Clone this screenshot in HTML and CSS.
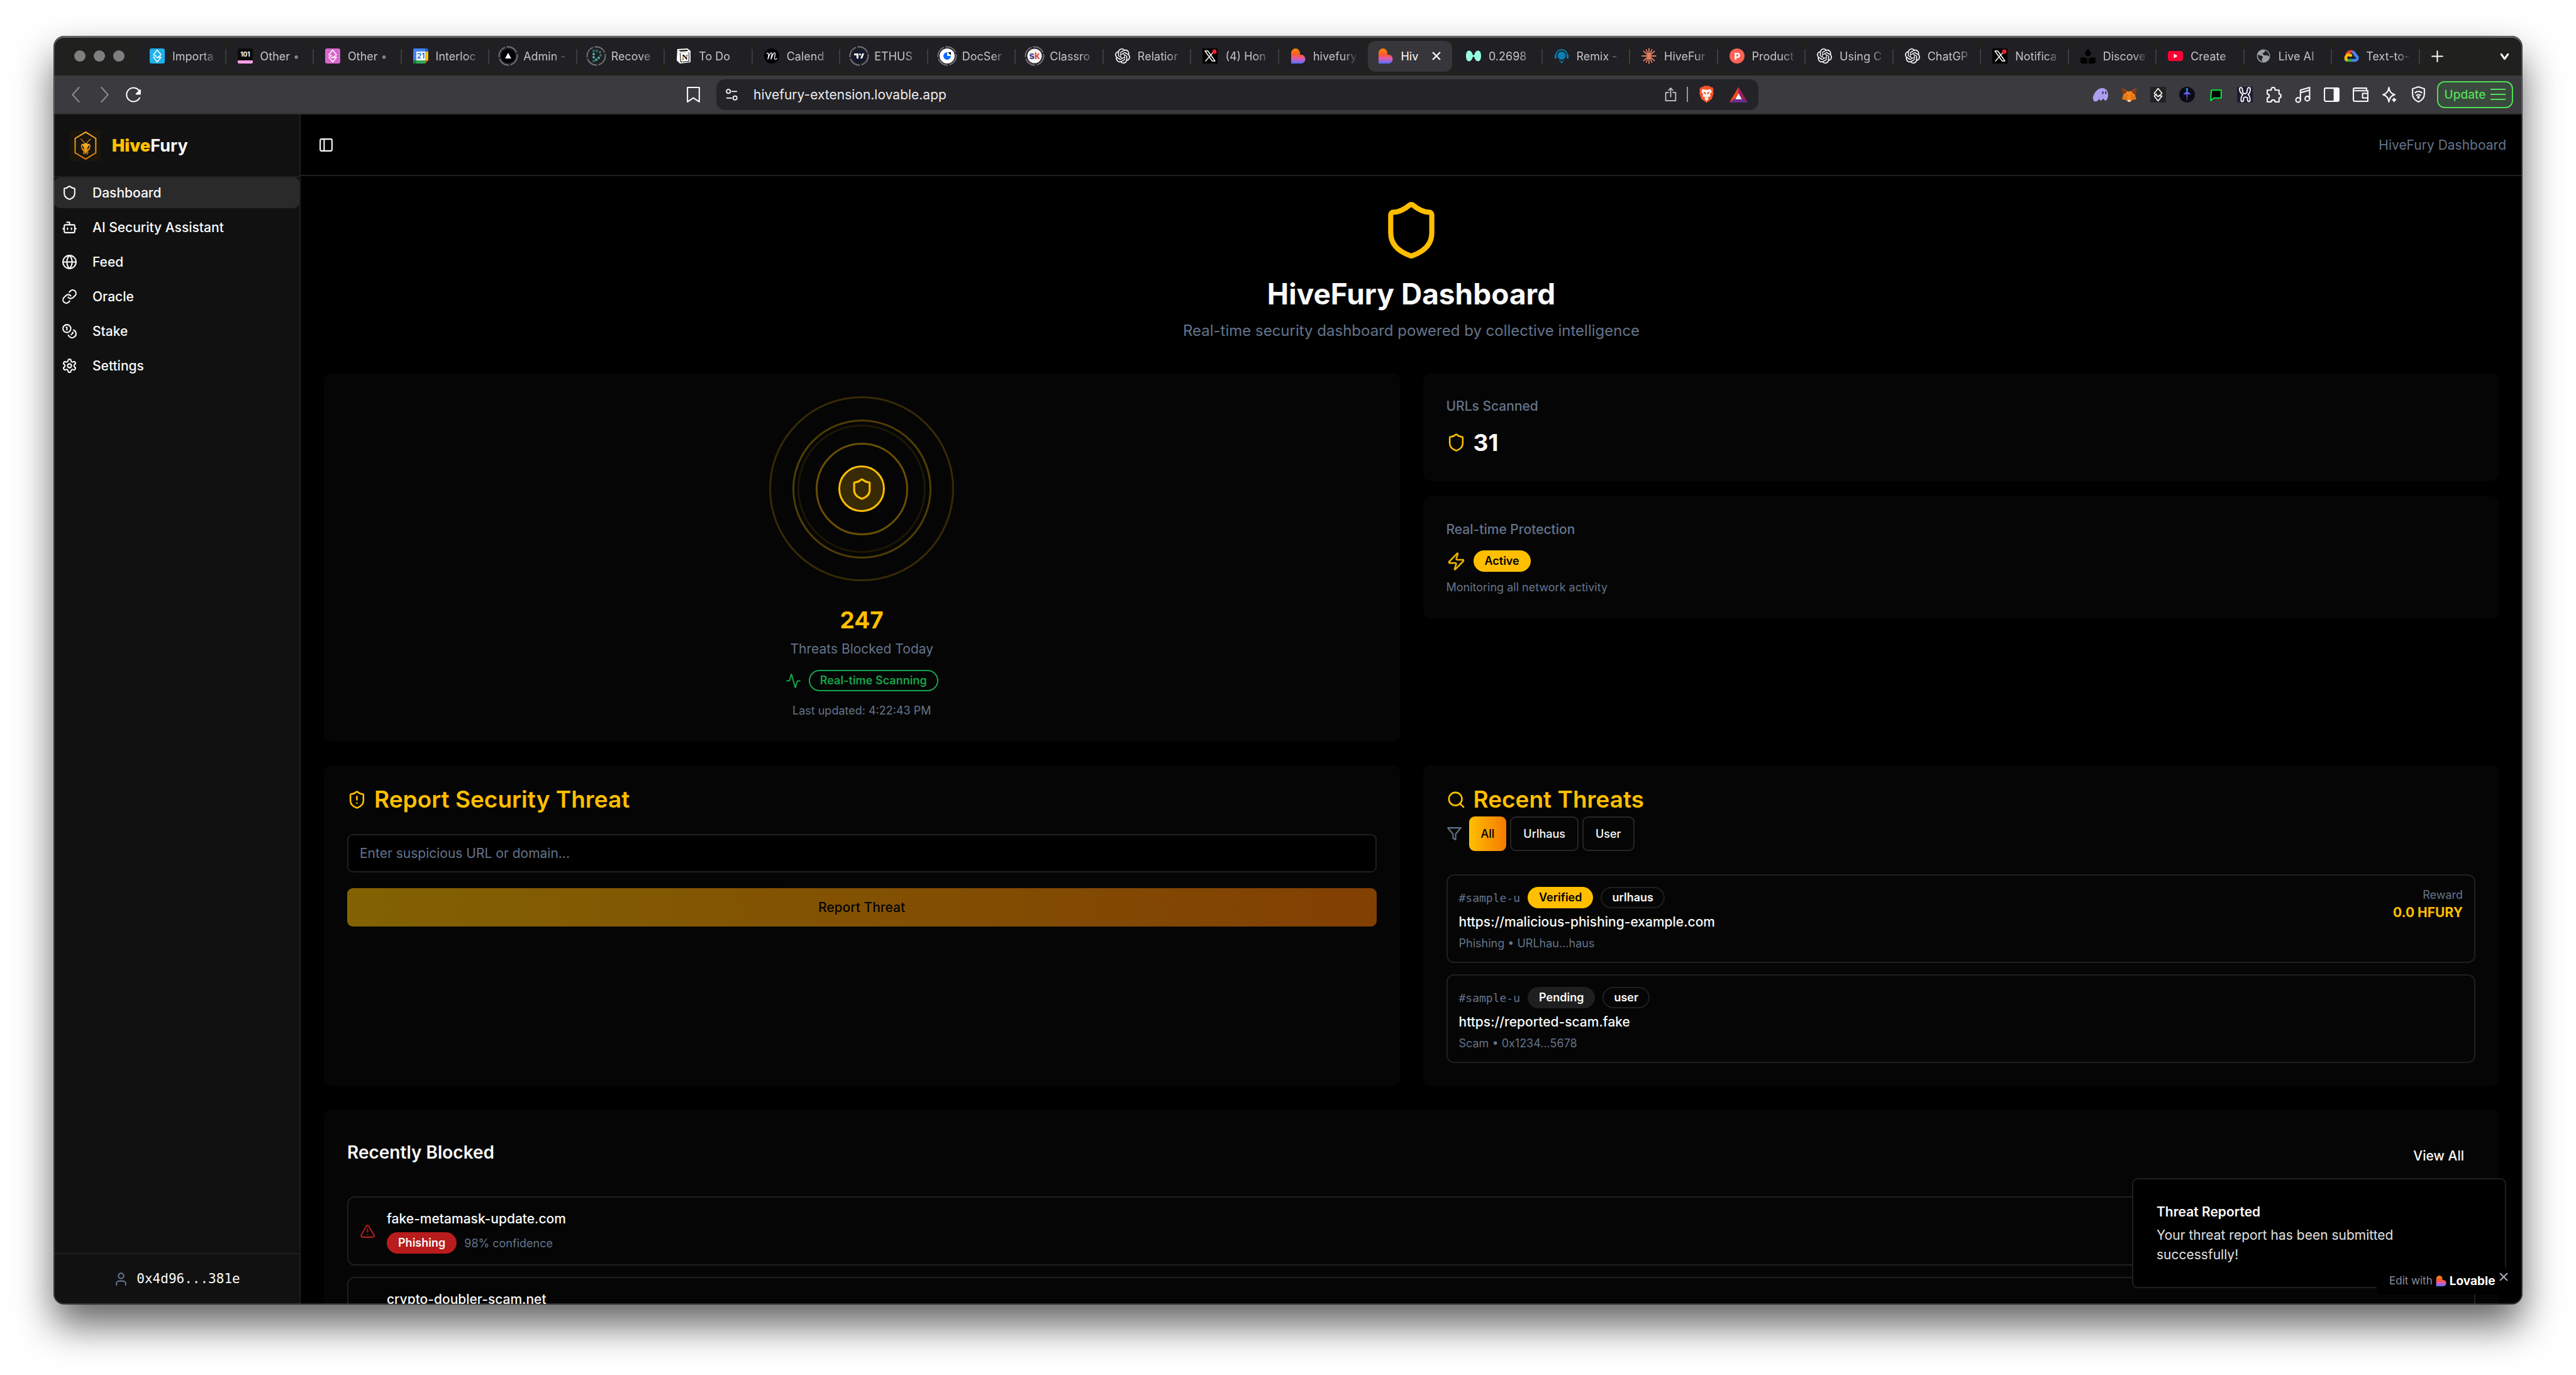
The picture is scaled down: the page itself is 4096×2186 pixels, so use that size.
FILE: index.html
```html
<!DOCTYPE html>
<html lang="en">
<head>
<meta charset="utf-8">
<title>HiveFury Dashboard</title>
<link rel="stylesheet" href="styles.css">
</head>
<body>
<svg class="defs" aria-hidden="true">
  <defs>
    <linearGradient id="g-lovable" x1="0" y1="0" x2="0" y2="1"><stop offset="0" stop-color="#ff8a00"/><stop offset=".4" stop-color="#ff5a2c"/><stop offset=".7" stop-color="#d85bb8"/><stop offset="1" stop-color="#4b73ff"/></linearGradient>
    <linearGradient id="g-sword" x1="0" y1="0" x2="0" y2="1"><stop offset="0" stop-color="#22d3ee"/><stop offset=".5" stop-color="#6d4bff"/><stop offset="1" stop-color="#ff8a3c"/></linearGradient>
    <linearGradient id="g-bee" x1="0" y1="0" x2="0" y2="1"><stop offset="0" stop-color="#ffb52e"/><stop offset="1" stop-color="#d98207"/></linearGradient>
  </defs>
  <symbol id="shield" viewBox="0 0 24 24"><path d="M20 13c0 5-3.500 7.500-7.660 8.950a1 1 0 0 1-.67-.01C7.500 20.500 4 18 4 13V6a1 1 0 0 1 1-1c2 0 4.500-1.200 6.240-2.720a1.170 1.170 0 0 1 1.520 0C14.510 3.810 17 5 19 5a1 1 0 0 1 1 1z"/></symbol>
  <symbol id="bot" viewBox="0 0 24 24"><path d="M12 8V4H8"/><rect width="16" height="12" x="4" y="8" rx="2"/><path d="M2 14h2M20 14h2M15 13v2M9 13v2"/></symbol>
  <symbol id="globe" viewBox="0 0 24 24"><circle cx="12" cy="12" r="10"/><path d="M12 2a14.500 14.500 0 0 0 0 20 14.500 14.500 0 0 0 0-20M2 12h20"/></symbol>
  <symbol id="link" viewBox="0 0 24 24"><path d="M10 13a5 5 0 0 0 7.540.54l3-3a5 5 0 0 0-7.070-7.070l-1.720 1.710"/><path d="M14 11a5 5 0 0 0-7.540-.54l-3 3a5 5 0 0 0 7.070 7.070l1.710-1.710"/></symbol>
  <symbol id="coins" viewBox="0 0 24 24"><circle cx="8" cy="8" r="6"/><path d="M18.090 10.370A6 6 0 1 1 10.340 18M7 6h1v4M16.710 13.880l.7.71-2.820 2.820"/></symbol>
  <symbol id="settings" viewBox="0 0 24 24"><path d="M12.220 2h-.44a2 2 0 0 0-2 2v.18a2 2 0 0 1-1 1.730l-.43.25a2 2 0 0 1-2 0l-.15-.08a2 2 0 0 0-2.730.73l-.22.38a2 2 0 0 0 .73 2.730l.15.1a2 2 0 0 1 1 1.720v.51a2 2 0 0 1-1 1.740l-.15.09a2 2 0 0 0-.73 2.730l.22.38a2 2 0 0 0 2.730.73l.15-.08a2 2 0 0 1 2 0l.43.25a2 2 0 0 1 1 1.730V20a2 2 0 0 0 2 2h.44a2 2 0 0 0 2-2v-.18a2 2 0 0 1 1-1.730l.43-.25a2 2 0 0 1 2 0l.15.08a2 2 0 0 0 2.730-.73l.22-.39a2 2 0 0 0-.73-2.730l-.15-.08a2 2 0 0 1-1-1.740v-.5a2 2 0 0 1 1-1.740l.15-.09a2 2 0 0 0 .73-2.730l-.22-.38a2 2 0 0 0-2.730-.73l-.15.08a2 2 0 0 1-2 0l-.43-.25a2 2 0 0 1-1-1.730V4a2 2 0 0 0-2-2z"/><circle cx="12" cy="12" r="3"/></symbol>
  <symbol id="panel" viewBox="0 0 24 24"><rect width="18" height="18" x="3" y="3" rx="2"/><path d="M9 3v18"/></symbol>
  <symbol id="activity" viewBox="0 0 24 24"><path d="M22 12h-2.480a2 2 0 0 0-1.930 1.460l-2.350 8.360a.25.25 0 0 1-.48 0L9.240 2.180a.25.25 0 0 0-.48 0l-2.350 8.360A2 2 0 0 1 4.490 12H2"/></symbol>
  <symbol id="zap" viewBox="0 0 24 24"><path d="M4 14a1 1 0 0 1-.78-1.630l9.900-10.200a.5.5 0 0 1 .86.46l-1.920 6.020A1 1 0 0 0 13 10h7a1 1 0 0 1 .78 1.630l-9.900 10.200a.5.5 0 0 1-.86-.46l1.920-6.020A1 1 0 0 0 11 14z"/></symbol>
  <symbol id="search" viewBox="0 0 24 24"><circle cx="11" cy="11" r="8"/><path d="m21 21-4.300-4.300"/></symbol>
  <symbol id="filter" viewBox="0 0 24 24"><path d="M22 3H2l8 9.460V19l4 2v-8.540z"/></symbol>
  <symbol id="alert" viewBox="0 0 24 24"><path d="m21.730 18-8-14a2 2 0 0 0-3.480 0l-8 14A2 2 0 0 0 4 21h16a2 2 0 0 0 1.730-3M12 9v4M12 17h.01"/></symbol>
  <symbol id="user" viewBox="0 0 24 24"><path d="M19 21v-2a4 4 0 0 0-4-4H9a4 4 0 0 0-4 4v2"/><circle cx="12" cy="7" r="4"/></symbol>
  <symbol id="x" viewBox="0 0 24 24"><path d="M5 5l14 14M19 5L5 19"/></symbol>
  <symbol id="lovable" viewBox="0 0 24 24"><path fill="url(#g-lovable)" stroke="none" d="M1 7.500a7 7.500 0 0 1 14 0V10h2a6.500 7 0 0 1 0 14H1z"/></symbol>
  <symbol id="openai" viewBox="0 0 24 24"><path fill="#fff" stroke="none" d="M22.2819 9.8211a5.9847 5.9847 0 0 0-.5157-4.9108 6.0462 6.0462 0 0 0-6.5098-2.9A6.0651 6.0651 0 0 0 4.9807 4.1818a5.9847 5.9847 0 0 0-3.9977 2.9 6.0462 6.0462 0 0 0 .7427 7.0966 5.98 5.98 0 0 0 .511 4.9107 6.051 6.051 0 0 0 6.5146 2.9001A5.9847 5.9847 0 0 0 13.2599 24a6.0557 6.0557 0 0 0 5.7718-4.2058 5.9894 5.9894 0 0 0 3.9977-2.9001 6.0557 6.0557 0 0 0-.7475-7.0729zm-9.022 12.6081a4.4755 4.4755 0 0 1-2.8764-1.0408l.1419-.0804 4.7783-2.7582a.7948.7948 0 0 0 .3927-.6813v-6.7369l2.02 1.1686a.071.071 0 0 1 .038.052v5.5826a4.504 4.504 0 0 1-4.4945 4.4944zm-9.6607-4.1254a4.4708 4.4708 0 0 1-.5346-3.0137l.142.0852 4.783 2.7582a.7712.7712 0 0 0 .7806 0l5.8428-3.3685v2.3324a.0804.0804 0 0 1-.0332.0615L9.74 19.9502a4.4992 4.4992 0 0 1-6.1408-1.6464zM2.3408 7.8956a4.485 4.485 0 0 1 2.3655-1.9728V11.6a.7664.7664 0 0 0 .3879.6765l5.8144 3.3543-2.0201 1.1685a.0757.0757 0 0 1-.071 0l-4.8303-2.7865A4.504 4.504 0 0 1 2.3408 7.872zm16.5963 3.8558L13.1038 8.364 15.1192 7.2a.0757.0757 0 0 1 .071 0l4.8303 2.7913a4.4944 4.4944 0 0 1-.6765 8.1042v-5.6772a.79.79 0 0 0-.407-.667zm2.0107-3.0231l-.142-.0852-4.7735-2.7818a.7759.7759 0 0 0-.7854 0L9.409 9.2297V6.8974a.0662.0662 0 0 1 .0284-.0615l4.8303-2.7866a4.4992 4.4992 0 0 1 6.6802 4.66zM8.3065 12.863l-2.02-1.1638a.0804.0804 0 0 1-.038-.0567V6.0742a4.4992 4.4992 0 0 1 7.3757-3.4537l-.142.0805L8.704 5.459a.7948.7948 0 0 0-.3927.6813zm1.0976-2.3654l2.602-1.4998 2.6069 1.4998v2.9994l-2.5974 1.4997-2.6067-1.4997Z"/></symbol>
  <symbol id="skiff" viewBox="0 0 24 24"><path fill="none" stroke="#fff" stroke-width="1.500" stroke-linejoin="round" d="M12 2.500L6 10l6 5 6-5zM6 14l6 7.500L18 14h-6M6 14l4-3"/></symbol>
  <symbol id="xlogo" viewBox="0 0 24 24"><rect width="24" height="24" fill="#000"/><path fill="none" stroke="#fff" stroke-width="1.500" d="M4 4h4.500L20 20h-4.500zM19 4L5 20"/><circle cx="19" cy="5" r="3.500" fill="#f4212e"/></symbol>
</svg>

<div class="window">
  <div class="tabstrip">
    <div class="lights"><i></i><i></i><i></i></div>
    <div class="tabs" role="tablist">
      <button class="tab" role="tab"><svg class="fav" viewBox="0 0 24 24"><rect width="24" height="24" rx="3" fill="#1fb0ec"/><use href="#skiff"/></svg><span>Importa</span></button>
      <button class="tab" role="tab"><svg class="fav" viewBox="0 0 24 24"><rect width="24" height="24" rx="2" fill="#0b0b0b"/><path d="M0 19h24v3a2 2 0 0 1-2 2H2a2 2 0 0 1-2-2z" fill="#ffa0ea"/><text x="12" y="13" text-anchor="middle" font-size="10" font-weight="700" fill="#fff">101</text></svg><span>Other •</span></button>
      <button class="tab" role="tab"><svg class="fav" viewBox="0 0 24 24"><rect width="24" height="24" rx="3" fill="#d966cc"/><use href="#skiff"/></svg><span>Other •</span></button>
      <button class="tab" role="tab"><svg class="fav" viewBox="0 0 24 24"><path fill="#4285f4" d="M2 0h17v24H0V2a2 2 0 0 1 2-2z"/><path fill="#1967d2" d="M19 0h3a2 2 0 0 1 2 2v3h-5z"/><path fill="#fbbc04" d="M19 5h5v14h-5z"/><path fill="#34a853" d="M0 19h19v5H2a2 2 0 0 1-2-2z"/><path fill="#188038" d="M0 19h5v5H2a2 2 0 0 1-2-2z"/><path fill="#ea4335" d="M19 19h5l-5 5z"/><path fill="#fff" d="M5 5h14v14H5z"/><text x="12" y="16" text-anchor="middle" font-size="12" font-weight="600" fill="#1967d2">21</text></svg><span>Interloc</span></button>
      <button class="tab" role="tab"><svg class="fav ring" viewBox="0 0 32 32"><circle class="dash" cx="16" cy="16" r="14.500"/><circle cx="16" cy="16" r="11" fill="#000"/><path fill="#fff" d="M16 11l5 9H11z"/></svg><span>Admin -</span></button>
      <button class="tab" role="tab"><svg class="fav ring" viewBox="0 0 32 32"><circle class="dash" cx="16" cy="16" r="14.500"/><g fill="#2f6f70"><circle cx="12" cy="8" r="2"/><circle cx="17" cy="8" r="2"/><circle cx="22" cy="10" r="2"/><circle cx="23" cy="15" r="2"/><circle cx="12" cy="24" r="2"/></g><g fill="#4fb0a8"><circle cx="12" cy="13" r="2"/><circle cx="20" cy="19" r="2"/><circle cx="16" cy="22" r="2"/><circle cx="12" cy="18" r="2"/></g></svg><span>Recove</span></button>
      <button class="tab" role="tab"><svg class="fav" viewBox="0 0 24 24"><path fill="#fff" d="M2 1l16-1 5 4v18l-17 2-5-5z"/><path fill="#0b0b0b" d="M4 3l13-1 3 2-13 1zM6 7l15-1v15L7 22z"/><path fill="#fff" d="M7 7l13-1v14L8 21z"/><text x="14" y="18" text-anchor="middle" font-size="13" font-weight="700" font-family="Liberation Serif, serif" fill="#000">N</text></svg><span>To Do</span></button>
      <button class="tab" role="tab"><svg class="fav" viewBox="0 0 24 24"><circle cx="12" cy="12" r="12" fill="#000"/><path fill="none" stroke="#fff" stroke-width="1.300" d="M4 8c3-2 4 1 2 9 2-6 4-11 6-10 2 1-2 8-1 10 2-5 4-11 6-10s-2 9 0 10q2 1 3-1"/></svg><span>Calend</span></button>
      <button class="tab" role="tab"><svg class="fav ring" viewBox="0 0 32 32"><circle class="dash" cx="16" cy="16" r="14.500"/><circle cx="16" cy="16" r="11" fill="#131a2c"/><path fill="#fff" d="M8 12h7v8h-3v-5H8zM21 20h-3l3-8h3z"/><circle cx="17.500" cy="13.500" r="1.600" fill="#fff"/></svg><span>ETHUS</span></button>
      <button class="tab" role="tab"><svg class="fav ring" viewBox="0 0 32 32"><circle class="dash" cx="16" cy="16" r="14.500"/><circle cx="16" cy="16" r="12" fill="#fff"/><path fill="#0a6cff" d="M16 10v6h6a6 6 0 1 1-6-6z"/><path fill="#111" d="M17 10h5v5z"/></svg><span>DocSer</span></button>
      <button class="tab" role="tab"><svg class="fav ring" viewBox="0 0 32 32"><circle class="dash" cx="16" cy="16" r="14.500"/><circle cx="16" cy="16" r="11.500" fill="#f6f3f2"/><text x="16" y="21" text-anchor="middle" font-size="15" font-weight="700" fill="#2d3091">s<tspan fill="#ea4c36">k</tspan></text></svg><span>Classro</span></button>
      <button class="tab" role="tab"><svg class="fav"><use href="#openai"/></svg><span>Relatior</span></button>
      <button class="tab" role="tab"><svg class="fav"><use href="#xlogo"/></svg><span>(4) Hon</span></button>
      <button class="tab" role="tab"><svg class="fav"><use href="#lovable"/></svg><span>hivefury</span></button>
      <button class="tab active" role="tab" aria-selected="true"><svg class="fav"><use href="#lovable"/></svg><span>Hiv</span><svg class="close heavy"><use href="#x"/></svg></button>
      <button class="tab" role="tab"><svg class="fav" viewBox="0 0 24 24"><path fill="#97fce4" d="M0 12c0-11 8-10 10-4 1 4 3 4 4 0 2-6 10-7 10 4s-8 10-10 4c-1-4-3-4-4 0-2 6-10 7-10-4z"/></svg><span>0.2698</span></button>
      <button class="tab" role="tab"><svg class="fav" viewBox="0 0 24 24"><path fill="none" stroke="#0b7fb0" stroke-width="2" d="M3 11a9 9 0 0 1 18 0"/><path fill="#0b7fb0" d="M12 5a6 6 0 1 1 0 13 6 6 0 0 1 0-13zM1 10h3v6H1zM20 10h3v6h-3zM7 18l5 3 5-3-5 6z"/></svg><span>Remix -</span></button>
      <button class="tab" role="tab"><svg class="fav" viewBox="0 0 24 24"><path fill="none" stroke="#e08060" stroke-width="1.800" d="M12 0v24M1 12h22M3.500 4.500l17 15M20.500 4.500l-17 15M7.500 2l9 20M16.500 2l-9 20"/></svg><span>HiveFur</span></button>
      <button class="tab" role="tab"><svg class="fav" viewBox="0 0 24 24"><circle cx="12" cy="12" r="12" fill="#ff6154"/><text x="12.500" y="17.500" text-anchor="middle" font-size="15" font-weight="800" fill="#fff">P</text></svg><span>Product</span></button>
      <button class="tab" role="tab"><svg class="fav"><use href="#openai"/></svg><span>Using C</span></button>
      <button class="tab" role="tab"><svg class="fav"><use href="#openai"/></svg><span>ChatGP</span></button>
      <button class="tab" role="tab"><svg class="fav"><use href="#xlogo"/></svg><span>Notifica</span></button>
      <button class="tab" role="tab"><svg class="fav" viewBox="0 0 24 24"><path fill="#000" d="M12 0q5 6 5 8t-5 5q-5-3-5-5t5-8zM0 15q8-2 11 2v7H3q-3 0-3-3zM24 15q-8-2-11 2v7h8q3 0 3-3z"/></svg><span>Discove</span></button>
      <button class="tab" role="tab"><svg class="fav" viewBox="0 0 24 24"><rect y="4" width="24" height="16" rx="4" fill="#ff0033"/><path fill="#fff" d="M9.500 8.500v7l6-3.500z"/></svg><span>Create</span></button>
      <button class="tab" role="tab"><svg class="fav" viewBox="0 0 24 24"><circle cx="12" cy="12" r="10.500" fill="#9aa0a6"/><path fill="#201f23" d="M3 10l7 2q2 2 0 4t1 5q-8-2-8-11zM14 3q1 3-2 4t0 3 4 1 5 2q1-7-7-10z"/></svg><span>Live AI</span></button>
      <button class="tab" role="tab"><svg class="fav" viewBox="0 0 24 24"><g fill="none" stroke-width="4.500"><path stroke="#ea4335" d="M6 9a6.500 6.500 0 0 1 11-2"/><path stroke="#4285f4" d="M16 6q3 2 3 5a4 4 0 0 1-1 8h-6"/><path stroke="#34a853" d="M12 19H7q-2 0-3-1"/><path stroke="#fbbc04" d="M5 18a5 5 0 0 1 4-8l3 1"/></g></svg><span>Text-to-</span></button>
    </div>
    <div class="strip-end">
      <button class="bare" aria-label="New tab"><svg class="ic" viewBox="0 0 24 24"><path d="M12 4v16M4 12h16"/></svg></button>
      <button class="bare" aria-label="Search tabs"><svg class="ic heavy" viewBox="0 0 24 24"><path d="M7 9l5 7 5-7"/></svg></button>
    </div>
  </div>

  <div class="toolbar">
    <div class="nav-left">
      <button class="bare dim" aria-label="Back"><svg class="ic" viewBox="0 0 24 24"><path d="M17 1L7 12l10 11"/></svg></button>
      <button class="bare dim" aria-label="Forward"><svg class="ic" viewBox="0 0 24 24"><path d="M7 1l10 11L7 23"/></svg></button>
      <button class="bare" aria-label="Reload"><svg class="ic" viewBox="0 0 24 24"><path d="M21 17a10.500 10.500 0 1 1 0-10"/><path fill="currentColor" d="M22 5v6h-6z"/></svg></button>
    </div>
    <button class="bare bookmark" aria-label="Bookmark"><svg class="ic" viewBox="0 0 24 24"><path d="M3 1h18v22l-9-6-9 6z"/></svg></button>
    <div class="address">
      <svg class="ic small-ic" viewBox="0 0 24 24"><circle cx="6" cy="6" r="3.500"/><path d="M12 6h9M3 18h9"/><circle cx="18" cy="18" r="3.500"/></svg>
      <input type="text" aria-label="Address" value="hivefury-extension.lovable.app">
      <div class="address-end">
        <svg class="ic small-ic" viewBox="0 0 24 24"><path d="M8 8H3v15h18V8h-5M12 16V0M8 4l4-4 4 4"/></svg>
        <i class="bar"></i>
        <svg class="ic solid brave" viewBox="0 0 24 26"><path fill="#fb542b" d="M8 0h8l2 2 3 0 2 4-1 2 1 3-3 9-8 6-8-6-3-9 1-3-1-2 2-4h3z"/><path fill="#fff" d="M6 5l4 1h4l4-1 2 4-3 4 1 3-4 1 1 3-3 3-3-3 1-3-4-1 1-3-3-4z"/><path fill="#fb542b" d="M7 9l4 1v4l-3-3zM17 9l-4 1v4l3-3zM10 18h4l-2 1z"/></svg>
        <svg class="ic solid bat" viewBox="0 0 28 24"><path fill="#ff4724" d="M14 0v10l-5 8-9 6z"/><path fill="#9e1f63" d="M14 0v10l5 8 9 6z"/><path fill="#662d91" d="M0 24l9-6h10l9 6z"/><path fill="#fff" d="M14 10l5 9H9z"/></svg>
      </div>
    </div>
    <div class="extensions">
      <svg class="ic solid" viewBox="0 0 24 24"><path fill="#ab9ff2" d="M3 22C-3 18 5 2 15 2c6 0 9 5 9 10s-2 9-4 9-2-3-3-3-2 3-4 3-2-3-3-2-3 5-7 3z"/><ellipse cx="16" cy="9" rx="1.200" ry="2.200" fill="#3b3a3e"/><ellipse cx="20.500" cy="9" rx="1.200" ry="2.200" fill="#3b3a3e"/></svg>
      <svg class="ic solid" viewBox="0 0 24 24"><path fill="#f6851b" d="M1 2l9 5h4l9-5-2 11 2 6-6 1-3 3h-4l-3-3-6-1 2-6z"/><path fill="#8a3a12" d="M1 2l8 5-4 4-3 1zM23 2l-8 5 4 4 3 1z"/><path fill="#e2761b" d="M3 13l5 1 2 6-8-1zM21 13l-5 1-2 6 8-1z"/><path fill="#eee" d="M10 20h4l-1 3h-2z"/><path fill="#222" d="M7 12l2 1v1zM17 12l-2 1v1z"/></svg>
      <svg class="ic solid" viewBox="0 0 24 24"><rect width="24" height="24" fill="#232323"/><use href="#skiff"/></svg>
      <svg class="ic solid" viewBox="0 0 24 24"><circle cx="12" cy="12" r="12" fill="#0a0a18"/><path fill="url(#g-sword)" d="M11 2h2v6l4 2v2l-4-1-1 11-1-11-4 1v-2l4-2z"/></svg>
      <svg class="ic" viewBox="0 0 24 24"><path fill="#000" stroke="#00e63c" d="M5 5h15v12H9l-5 4z"/></svg>
      <svg class="ic" viewBox="0 0 24 24"><rect width="24" height="24" fill="#1d1b33" stroke="none"/><path stroke-width="1.800" d="M4 2q3-2 4 1l1 6q3 3 6 0l1-6q1-3 4-1 1 6-3 10 3 2 3 9-2 3-4 0v-4q-3-3-6 0v4q-2 3-4 0 0-7 3-9Q3 8 4 2z"/></svg>
      <svg class="ic" viewBox="0 0 24 24"><path d="M2 5h6q0-4 3-4t3 4h6v6q3 0 3 3t-3 3v6h-6q0-3-3-3t-3 3H2v-6q3 0 3-3t-3-3z"/></svg>
      <svg class="ic" viewBox="0 0 24 24"><circle cx="5" cy="20" r="3.500"/><circle cx="19" cy="18" r="3.500"/><path d="M8.500 20V5l14-4v17M8.500 9l14-4"/></svg>
      <svg class="ic" viewBox="0 0 24 24"><rect x="1" y="2" width="22" height="20" rx="2"/><path fill="currentColor" stroke="none" d="M15 2h8v20h-8z"/></svg>
      <svg class="ic" viewBox="0 0 24 24"><path d="M21 6V2H3a2 2 0 0 0-2 2v16a2 2 0 0 0 2 2h20V6H3M23 10h-8v7h8"/></svg>
      <svg class="ic" viewBox="0 0 24 24"><path d="M11 1q1 9 9 11-8 2-9 11-1-9-9-11 8-2 9-11z"/><path fill="currentColor" stroke="none" d="M19 16q1 3 4 4-3 1-4 4-1-3-4-4 3-1 4-4z"/></svg>
      <svg class="ic" viewBox="0 0 24 24"><path d="M12 0l9 3v8q0 8-9 12-9-4-9-12V3z"/><path d="M7 9q5-4 10 0M9 13q3-2 6 0"/><circle cx="12" cy="16" r="1"/></svg>
    </div>
    <button class="update">Update<svg viewBox="0 0 24 24"><path d="M0 4h24M0 12h24M0 20h24"/></svg></button>
  </div>

  <div class="page">
    <aside class="sidebar">
      <div class="brand">
        <svg class="logo" viewBox="0 0 64 64"><rect width="64" height="64" fill="#1a150d"/><path fill="none" stroke="url(#g-bee)" stroke-width="2.500" stroke-linejoin="round" d="M33 4l21 13v30L33 60 11 47V17z"/><path fill="none" stroke="#e8991a" stroke-width="1.500" d="M31 30l-2-6-6-6M35 30l2-6 6-6"/><path fill="url(#g-bee)" d="M33 26l4 3 4-1 2 5-2 7-4 4-4 6-4-6-4-4-2-7 2-5 4 1z"/><path fill="#1a150d" d="M25 31q4 2 5 9-5-2-5-9zM41 31q-4 2-5 9 5-2 5-9z"/><path fill="none" stroke="#e8991a" stroke-width="1.500" d="M28 45l2 5M38 45l-2 5"/></svg>
        <span class="brand-name"><b>Hive</b>Fury</span>
      </div>
      <nav class="menu">
        <a href="#dashboard" class="on"><svg class="i16"><use href="#shield"/></svg>Dashboard</a>
        <a href="#assistant"><svg class="i16"><use href="#bot"/></svg>AI Security Assistant</a>
        <a href="#feed"><svg class="i16"><use href="#globe"/></svg>Feed</a>
        <a href="#oracle"><svg class="i16"><use href="#link"/></svg>Oracle</a>
        <a href="#stake"><svg class="i16"><use href="#coins"/></svg>Stake</a>
        <a href="#settings-page"><svg class="i16"><use href="#settings"/></svg>Settings</a>
      </nav>
      <div class="account"><svg class="i16"><use href="#user"/></svg><span>0x4d96...381e</span></div>
    </aside>

    <main class="main">
      <header class="topbar">
        <button class="bare" aria-label="Toggle sidebar"><svg class="i16"><use href="#panel"/></svg></button>
        <span>HiveFury Dashboard</span>
      </header>
      <div class="content">
        <section class="hero">
          <svg class="hero-icon"><use href="#shield"/></svg>
          <h1>HiveFury Dashboard</h1>
          <p>Real-time security dashboard powered by collective intelligence</p>
        </section>

        <div class="cols">
          <section class="card radar-card">
            <div class="radar">
              <i class="r r1"></i><i class="r r2"></i><i class="r ping"></i><i class="r r3"></i>
              <span class="core"><svg><use href="#shield"/></svg></span>
            </div>
            <strong class="count">247</strong>
            <p class="count-label">Threats Blocked Today</p>
            <div class="line scanning"><svg class="i16"><use href="#activity"/></svg><span class="badge green">Real-time Scanning</span></div>
            <p class="small">Last updated: 4:22:43 PM</p>
          </section>
          <div class="stats">
            <section class="card">
              <h3>URLs Scanned</h3>
              <div class="line"><svg class="i20"><use href="#shield"/></svg><strong class="num">31</strong></div>
            </section>
            <section class="card">
              <h3>Real-time Protection</h3>
              <div class="line"><svg class="i20 zap"><use href="#zap"/></svg><span class="badge gold">Active</span></div>
              <p class="small monitor">Monitoring all network activity</p>
            </section>
          </div>
        </div>

        <div class="cols">
          <section class="card">
            <h2><svg class="i20" viewBox="0 0 24 24"><use href="#shield"/><path d="M12 8v4M12 16h.01"/></svg>Report Security Threat</h2>
            <form class="report">
              <input type="text" aria-label="Suspicious URL or domain" placeholder="Enter suspicious URL or domain...">
              <button type="button">Report Threat</button>
            </form>
          </section>
          <section class="card">
            <h2><svg class="i20"><use href="#search"/></svg>Recent Threats</h2>
            <div class="filters">
              <svg class="i16"><use href="#filter"/></svg>
              <button class="on">All</button><button>Urlhaus</button><button>User</button>
            </div>
            <ul class="threats">
              <li>
                <div>
                  <div class="line"><code>#sample-u</code><span class="badge gold">Verified</span><span class="badge outline">urlhaus</span></div>
                  <p class="url">https://malicious-phishing-example.com</p>
                  <p class="small">Phishing • URLhau...haus</p>
                </div>
                <div class="reward"><span>Reward</span><b>0.0 HFURY</b></div>
              </li>
              <li>
                <div>
                  <div class="line"><code>#sample-u</code><span class="badge gray">Pending</span><span class="badge outline">user</span></div>
                  <p class="url">https://reported-scam.fake</p>
                  <p class="small">Scam • 0x1234...5678</p>
                </div>
              </li>
            </ul>
          </section>
        </div>

        <section class="card blocked">
          <div class="blocked-head"><h4>Recently Blocked</h4><button>View All</button></div>
          <ul class="blocked-list">
            <li><svg class="i16"><use href="#alert"/></svg><div><p class="url">fake-metamask-update.com</p><div class="line"><span class="badge red">Phishing</span><span class="small">98% confidence</span></div></div></li>
            <li><svg class="i16"><use href="#alert"/></svg><div><p class="url">crypto-doubler-scam.net</p><div class="line spacer"></div></div></li>
          </ul>
        </section>
      </div>
    </main>

    <div class="toast" role="status">
      <b>Threat Reported</b>
      <p>Your threat report has been submitted successfully!</p>
    </div>
    <div class="lovable"><a href="#edit">Edit with <svg><use href="#lovable"/></svg><b>Lovable</b></a><button class="bare" aria-label="Close badge"><svg class="heavy"><use href="#x"/></svg></button></div>
  </div>
</div>
</body>
</html>
```
FILE: styles.css
```css
*, *::before, *::after { box-sizing: border-box; }
html, body { height: 100%; margin: 0; }
body {
  display: flex;
  padding: 58px 86px 113px;
  overflow: hidden;
  background: #fff;
  color: #fafafa;
  font-family: Inter, "Liberation Sans", sans-serif;
  font-size: 21px;
  line-height: 31px;
}
h1, h2, h3, h4, p, ul { margin: 0; padding: 0; font-weight: inherit; font-size: inherit; }
ul { list-style: none; }
button, input { font: inherit; color: inherit; margin: 0; padding: 0; border: 0; background: none; }
a { color: inherit; text-decoration: none; }
svg { flex: none; fill: none; stroke: currentColor; stroke-width: 2; stroke-linecap: round; stroke-linejoin: round; }
text { stroke: none; }
.solid { stroke: none; }
.heavy { stroke-width: 3; }
.defs { position: absolute; width: 0; height: 0; }
.bare { display: flex; }
.i16 { width: 25px; height: 25px; }
.i20 { width: 31px; height: 31px; }
.ic { width: 25px; height: 25px; overflow: visible; }
.small-ic { width: 21px; height: 21px; }

/* browser window */
.window {
  position: relative;
  flex: 1;
  min-width: 0;
  display: flex;
  flex-direction: column;
  overflow: hidden;
  border-radius: 16px;
  background: #000;
  box-shadow: 0 0 0 1px rgba(0, 0, 0, .7), 0 33px 62px rgba(0, 0, 0, .62);
}
.window::after {
  content: "";
  position: absolute;
  inset: 0;
  border-radius: inherit;
  box-shadow: inset 0 0 0 1px rgba(255, 255, 255, .2), inset 0 2px 0 rgba(255, 255, 255, .28);
  pointer-events: none;
}
.tabstrip { display: flex; align-items: center; height: 62px; flex: none; background: #20201f; }
.lights { display: flex; gap: 13px; width: 133px; padding-left: 32px; flex: none; }
.lights i { width: 18px; height: 18px; border-radius: 50%; background: #7f7f7f; }
.tabs { flex: 1; min-width: 0; display: flex; }
.tab {
  position: relative;
  flex: 1 1 0;
  min-width: 0;
  height: 49px;
  display: flex;
  align-items: center;
  gap: 12px;
  padding: 0 6px 0 16px;
  margin: 0 3px;
  border-radius: 12px;
  background: #201f23;
  color: #c4c4c6;
  font-size: 18px;
}
.tab::after { content: ""; position: absolute; right: -4px; top: 13px; width: 2px; height: 24px; background: #3c3c3c; }
.tab.active { background: #37363b; color: #fff; }
.tab.active::after, .tab:has(+ .active)::after { display: none; }
.tab span {
  flex: 1;
  min-width: 0;
  white-space: nowrap;
  text-align: left;
  mask-image: linear-gradient(90deg, #000 64%, transparent 96%);
}
.tab.active span { mask-image: none; }
.tab .fav { width: 24px; height: 24px; stroke: none; overflow: visible; }
.tab .ring { width: 32px; height: 32px; margin: 0 -4px; }
.fav .dash { fill: none; stroke: #747478; stroke-width: 2; stroke-dasharray: 18 4; }
.tab .close { width: 18px; height: 18px; margin-right: 10px; }
.strip-end { display: flex; justify-content: space-between; width: 163px; padding: 0 15px 0 16px; }
.toolbar { display: flex; align-items: center; height: 62px; flex: none; background: #3b3a3e; border-bottom: 2px solid #2e2d31; padding: 0 14px 0 22px; }
.nav-left { display: flex; gap: 21px; width: 982px; }
.dim { color: #8a898d; }
.bookmark { margin-right: 24px; }
.address {
  display: flex;
  align-items: center;
  flex: 0 1 1657px;
  height: 49px;
  margin-right: auto;
  padding: 0 15px 0 14px;
  border-radius: 14px;
  background: #242327;
}
.address input { flex: 1; min-width: 0; margin-left: 24px; color: #ececee; outline: 0; }
.address-end { display: flex; align-items: center; gap: 18px; color: #c9c9cc; }
.address-end .bar { width: 2px; height: 24px; margin: 0 -1px 0 -3px; background: #9a9a9d; }
.address-end .brave { height: 28px; }
.address-end .bat { width: 33px; margin-left: 4px; }
.extensions { display: flex; gap: 21px; margin-right: 17px; }
.update {
  display: flex;
  align-items: center;
  justify-content: center;
  gap: 8px;
  width: 121px;
  height: 43px;
  border: 2px solid #4fdc55;
  border-radius: 12px;
  background: #3b4a3f;
  color: #56de5a;
  font-size: 19px;
  font-weight: 500;
}
.update svg { width: 24px; height: 24px; stroke-linecap: butt; }

/* app */
.page { position: relative; flex: 1; min-height: 0; display: flex; }
.sidebar { flex: none; width: 392px; display: flex; flex-direction: column; background: #111; border-right: 2px solid #1f1f1f; }
.brand { display: flex; align-items: center; gap: 18px; padding: 25px 25px 24px; border-bottom: 2px solid #1f1f1f; }
.logo { width: 49px; height: 49px; stroke: none; }
.brand-name { font-size: 27px; font-weight: 700; }
.brand-name b { color: #ffbf00; }
.menu { display: flex; flex-direction: column; gap: 6px; flex: 1; }
.menu a { display: flex; align-items: center; gap: 24px; height: 49px; padding: 0 12px; border-radius: 9px; font-weight: 500; }
.menu .on { background: #2a2a2a; }
.account { display: flex; align-items: center; justify-content: center; gap: 12px; padding: 24px; border-top: 2px solid #1f1f1f; font-family: "DejaVu Sans Mono", "Liberation Mono", monospace; }
.account svg { color: #64748b; }

.main { flex: 1; min-width: 0; }
.topbar { display: flex; align-items: center; justify-content: space-between; height: 98px; padding: 0 25px 0 28px; border-bottom: 2px solid #1f1f1f; color: #64748b; }
.topbar .bare { color: #fafafa; }
.content { display: flex; flex-direction: column; gap: 37px; padding: 37px; }
.hero { display: flex; flex-direction: column; align-items: center; padding-bottom: 12px; color: #64748b; }
.hero-icon { width: 98px; height: 98px; margin-bottom: 25px; color: #ffbf00; }
.hero h1 { margin-bottom: 12px; color: #fafafa; font-size: 46px; line-height: 55px; font-weight: 700; }
.hero p { font-size: 24px; line-height: 37px; }

.cols { display: grid; grid-template-columns: 1fr 1fr; gap: 37px; }
.card { padding: 37px; border-radius: 12px; background: #050505; }
.line { display: flex; align-items: center; gap: 12px; }
.small { color: #64748b; font-size: 18px; line-height: 25px; }
.url { font-weight: 500; }
.badge { height: 34px; padding: 0 16px; border: 2px solid transparent; border-radius: 17px; font-size: 18px; line-height: 30px; font-weight: 600; }
.gold { background: #ffbf00; color: #000; }
.green { border-color: #16a34a; color: #16a34a; }
.gray { background: #1f1f1f; }
.outline { border-color: #1f1f1f; }
.red { background: #b91c1c; }

.radar-card { display: flex; flex-direction: column; align-items: center; }
.radar { display: grid; place-items: center; width: 294px; height: 294px; margin-bottom: 37px; }
.radar > * { grid-area: 1 / 1; border-radius: 50%; border: 3px solid #ffbf00; }
.r1 { width: 294px; height: 294px; opacity: .2; }
.r2 { width: 221px; height: 221px; opacity: .3; }
.ping { width: 204px; height: 204px; opacity: .1; }
.r3 { width: 147px; height: 147px; opacity: .4; }
.core { display: grid; place-items: center; width: 74px; height: 74px; background: #382a04; color: #ffbf00; }
.core svg { width: 37px; height: 37px; }
.count { margin-bottom: 6px; color: #ffbf00; font-size: 37px; line-height: 49px; }
.count-label { color: #64748b; }
.scanning { margin: 18px 0; color: #16a34a; }
.stats { display: flex; flex-direction: column; gap: 24px; }
.stats h3 { margin-bottom: 18px; color: #64748b; font-weight: 500; }
.stats svg { color: #ffbf00; }
.stats .zap { color: #eab308; }
.num { font-size: 37px; line-height: 49px; }
.monitor { margin-top: 12px; }

.card h2 { display: flex; align-items: center; gap: 12px; color: #ffbf00; font-size: 37px; line-height: 36px; font-weight: 600; }
.report { display: flex; flex-direction: column; gap: 25px; padding-top: 37px; }
.report input { height: 61px; padding: 0 18px; border: 2px solid #1f1f1f; border-radius: 9px; background: #000; }
.report input::placeholder { color: #64748b; opacity: 1; }
.report button { height: 61px; border-radius: 9px; background: linear-gradient(90deg, #ffbf00, #ff7a00); color: #000; font-weight: 500; opacity: .5; }
.filters { display: flex; align-items: center; gap: 6px; margin: 9px 0 37px; }
.filters svg { margin-right: 5px; color: #64748b; }
.filters button { height: 55px; padding: 0 19px; border: 2px solid #262626; border-radius: 9px; font-size: 18px; font-weight: 500; }
.filters .on { border: 0; background: linear-gradient(90deg, #ffbf00, #f57a00); color: #000; }
.threats { display: flex; flex-direction: column; gap: 18px; }
.threats li { display: flex; justify-content: space-between; padding: 18px 18px 17px; border: 2px solid #1f1f1f; border-radius: 12px; }
.threats p { margin-top: 6px; }
code { color: #64748b; font: 18px/25px "DejaVu Sans Mono", "Liberation Mono", monospace; }
.reward { display: flex; flex-direction: column; align-items: flex-end; }
.reward span { color: #64748b; font-size: 18px; line-height: 25px; }
.reward b { color: #ffbf00; font-weight: 700; }
.blocked-head { display: flex; justify-content: space-between; padding: 9px 0 37px; }
.blocked-head h4 { font-size: 28px; line-height: 45px; font-weight: 600; }
.blocked-head button { height: 55px; padding: 0 18px; font-weight: 500; }
.blocked-list { display: flex; flex-direction: column; gap: 18px; }
.blocked-list li { display: flex; align-items: center; gap: 18px; padding: 18px 18px 17px; border: 2px solid #1f1f1f; border-radius: 12px; }
.blocked-list .line { margin-top: 6px; }
.blocked-list .spacer { height: 34px; }
.blocked-list svg { color: #b91c1c; }

/* overlays */
.toast { position: absolute; right: 25px; bottom: 25px; width: 595px; padding: 36px 48px 36px 37px; border: 2px solid #1f1f1f; border-radius: 9px; background: #000; }
.toast b { display: block; margin-bottom: 6px; font-weight: 600; }
.toast p { color: #e1e1e1; }
.lovable { position: absolute; right: 15px; bottom: 15px; display: flex; width: 216px; height: 43px; padding: 0 5px 0 20px; border-radius: 8px; background: #000; }
.lovable a { display: flex; align-items: center; flex: 1; gap: 5px; color: #8e8e96; font-size: 17px; }
.lovable b { color: #fff; font-size: 19px; font-weight: 700; }
.lovable svg { width: 17px; height: 17px; }
.lovable .bare { padding-top: 6px; color: #a5a5ad; }
.lovable .bare svg { width: 18px; height: 18px; }
```
